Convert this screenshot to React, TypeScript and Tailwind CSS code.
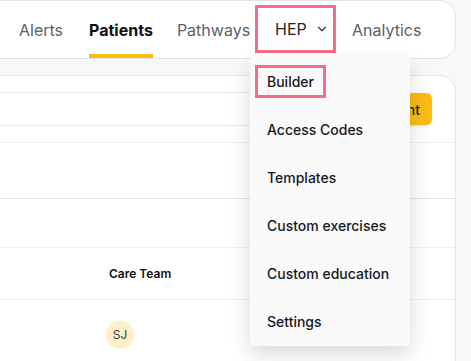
import { ChevronDown } from "lucide-react";

const menuItems = ["Builder", "Access Codes", "Templates", "Custom exercises", "Custom education", "Settings"];

export default function App() {
  return (
    <div
      className="relative w-[471px] h-[361px] overflow-hidden bg-[#f7f8fa]"
      style={{ fontFamily: "Inter, 'Noto Sans', sans-serif" }}
    >
      {/* top nav */}
      <div className="ml-[-20px] w-[476px] h-[59px] rounded-2xl border border-[#e2e5ea] bg-white flex items-stretch pl-[38px] whitespace-nowrap">
        <div className="flex items-center text-[16px] text-[#5b6168]">Alerts</div>
        <div className="relative ml-[26px] flex items-center text-[16px] font-bold text-[#111]">
          Patients
          <div className="absolute left-0 right-0 bottom-0 h-[4px] bg-[#fbbc13]" />
        </div>
        <div className="ml-[24px] flex items-center text-[16px] text-[#5b6168]">Pathways</div>
        <div className="ml-[5px] mt-[4px] h-[48px] w-[81px] shrink-0 border-[3px] border-[#f36e8b] flex items-center pl-[17px] text-[16px] text-[#1f2328]">
          HEP
          <ChevronDown className="ml-[8px] w-[14px] h-[14px] shrink-0 text-[#333]" strokeWidth={2} />
        </div>
        <div className="ml-[16px] flex items-center text-[16px] text-[#5b6168]">Analytics</div>
      </div>

      {/* main card */}
      <div className="mt-[16px] ml-[-20px] w-[476px] h-[320px] rounded-2xl border border-[#e2e5ea] bg-white">
        <div className="flex items-center justify-between pt-[16px] pb-[16px] pr-[23px] border-b border-[#edf0f3]">
          <div className="w-[330px] h-[34px] border-y border-[#e9ecef]" />
          <button className="h-[32px] px-[12px] rounded-md bg-[#fbbc13] text-[14px] font-medium text-[#1f1f1f] shadow-sm">
            Add Patient
          </button>
        </div>
        <div className="h-[56px] border-b border-[#dde1e6]" />
        <div className="h-[49px] border-b border-[#edf0f3]" />
        <div className="h-[52px] border-b border-[#edf0f3] flex items-center pl-[128px] text-[12px] font-semibold text-[#111]">
          Care Team
        </div>
        <div className="h-[70px] flex items-center pl-[125px]">
          <div className="w-[28px] h-[28px] rounded-full bg-[#fdf0c8] flex items-center justify-center text-[12px] text-[#3b3f45]">
            SJ
          </div>
        </div>
      </div>

      {/* HEP dropdown */}
      <div className="absolute left-[250px] top-[57px] w-[160px] h-[289px] bg-[#fafafa] shadow-[0_8px_20px_rgba(0,0,0,0.15)]">
        {menuItems.map((item, i) => (
          <div key={item} className="h-[48px] flex items-center pl-[17px] text-[14px] font-medium text-[#18181b]">
            {i === 0 ? (
              <span className="ml-[-12px] border-[3px] border-[#f36e8b] px-[9px] h-[33px] flex items-center">{item}</span>
            ) : (
              item
            )}
          </div>
        ))}
      </div>
    </div>
  );
}
